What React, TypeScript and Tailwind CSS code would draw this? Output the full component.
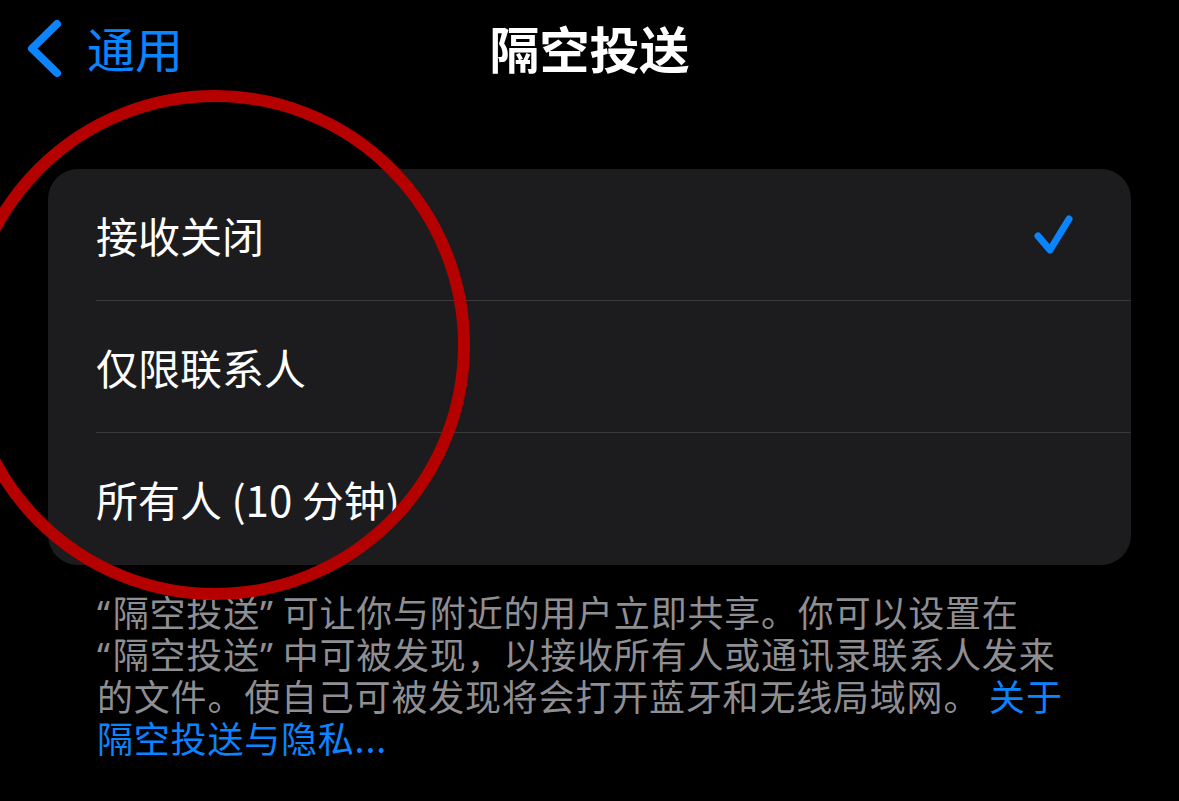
import { Fragment } from 'react'

const options = [
  { label: '接收关闭', checked: true },
  { label: '仅限联系人', checked: false },
  { label: '所有人 (10 分钟)', checked: false },
]

function Chevron() {
  return (
    <svg className="w-[44px] h-[64px]" viewBox="0 0 44 64" fill="none">
      <path
        d="M33 9 L8 33.5 L33 58"
        stroke="#0a84ff"
        strokeWidth="8"
        strokeLinecap="round"
        strokeLinejoin="round"
      />
    </svg>
  )
}

function Check() {
  return (
    <svg className="w-[44px] h-[44px]" viewBox="0 0 44 44" fill="none">
      <path
        d="M6 23 L18 37 L37 6"
        stroke="#0a84ff"
        strokeWidth="7"
        strokeLinecap="round"
        strokeLinejoin="round"
      />
    </svg>
  )
}

function Open() {
  return <span className="font-['Noto_Sans',sans-serif] mr-[2px]">“</span>
}

function Close() {
  return <span className="font-['Noto_Sans',sans-serif] mr-[9px]">”</span>
}

export default function App() {
  return (
    <div
      lang="zh-CN"
      className="relative w-[1179px] h-[801px] overflow-hidden bg-black font-['Noto_Sans_CJK_SC','Noto_Sans',sans-serif]"
    >
      {/* nav bar */}
      <header className="grid grid-cols-[1fr_auto_1fr] items-center h-[94px]">
        <div className="flex items-center pl-[24px] gap-[19px] text-[#0a84ff] text-[48px] leading-none">
          <Chevron />
          <span>通用</span>
        </div>
        <h1 className="text-white text-[50px] font-bold leading-none">隔空投送</h1>
        <div />
      </header>

      {/* options */}
      <div className="mt-[75px] mx-[48px] rounded-[30px] bg-[#1c1c1e]">
        {options.map((o, i) => (
          <Fragment key={o.label}>
            {i > 0 && <div className="ml-[48px] h-px bg-[#3a3a3c]" />}
            <div
              className={`flex items-center justify-between pl-[48px] pr-[55px] ${
                i === 2 ? 'h-[132px]' : 'h-[131px]'
              }`}
            >
              <span className="text-white text-[42px] leading-none">{o.label}</span>
              {o.checked && <Check />}
            </div>
          </Fragment>
        ))}
      </div>

      {/* footer */}
      <div className="mt-[25px] px-[97px] flex flex-col text-[36px] tracking-[0.8px] text-[#8e8e93] whitespace-nowrap">
        <span className="h-[42px] leading-[42px]">
          <Open />隔空投送<Close />可让你与附近的用户立即共享。你可以设置在
        </span>
        <span className="h-[42px] leading-[42px]">
          <Open />隔空投送<Close />中可被发现，以接收所有人或通讯录联系人发来
        </span>
        <span className="h-[42px] leading-[42px]">
          的文件。使自己可被发现将会打开蓝牙和无线局域网。 <span className="text-[#0a84ff]">关于</span>
        </span>
        <span className="h-[42px] leading-[42px] text-[#0a84ff]">隔空投送与隐私...</span>
      </div>

      {/* red annotation circle */}
      <svg className="absolute inset-0 pointer-events-none" width="1179" height="801">
        <circle cx="215" cy="345" r="249" fill="none" stroke="#b50000" strokeWidth="12" />
      </svg>
    </div>
  )
}
